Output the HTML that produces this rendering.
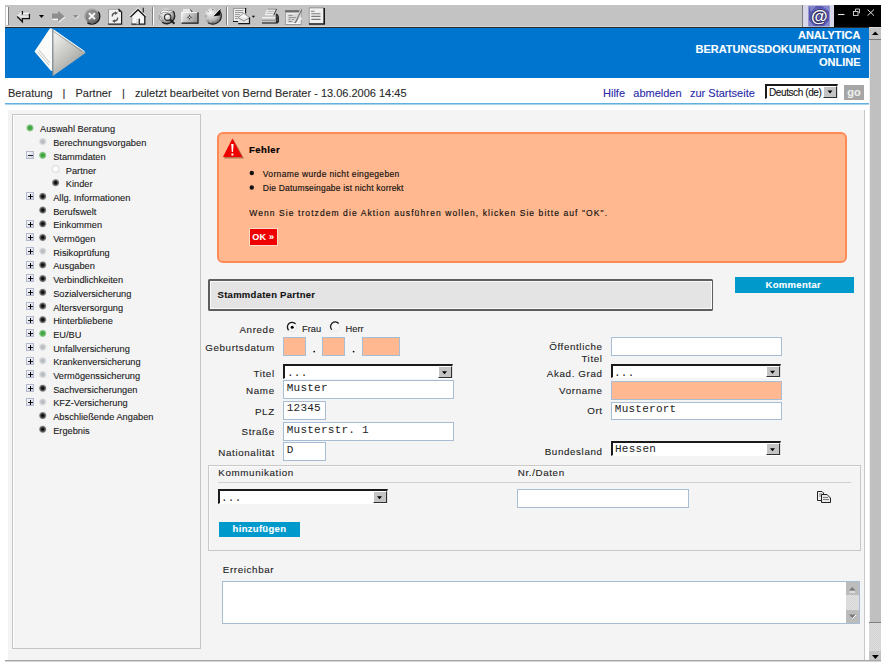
<!DOCTYPE html>
<html><head><meta charset="utf-8">
<style>
*{margin:0;padding:0;box-sizing:border-box}
html,body{width:887px;height:663px;overflow:hidden;background:#fff;font-family:"Liberation Sans",sans-serif;position:relative}
.a{position:absolute}
.t{position:absolute;white-space:nowrap;line-height:1;-webkit-text-stroke:0.1px currentColor}
svg{position:absolute;overflow:visible}
</style></head><body>

<div class="a" style="left:5px;top:5px;width:797px;height:21px;background:#c3c3c3"></div>
<div class="a" style="left:5px;top:26px;width:797px;height:1px;background:#d6d6d4"></div>
<div class="a" style="left:5px;top:27px;width:864px;height:1px;background:#2a2a2a"></div>
<div class="a" style="left:802px;top:5px;width:1px;height:22px;background:#7a7a7a"></div>
<div class="a" style="left:803px;top:5px;width:31px;height:22px;background:#d8d8ea"></div>
<div class="a" style="left:834px;top:5px;width:47px;height:22px;background:#000"></div>
<div class="a" style="left:6px;top:7px;width:2px;height:18px;background:#fff"></div>
<div class="a" style="left:8px;top:7px;width:1px;height:18px;background:#808080"></div>
<div class="a" style="left:152px;top:7px;width:1px;height:18px;background:#808080"></div>
<div class="a" style="left:153px;top:7px;width:1px;height:18px;background:#fff"></div>
<div class="a" style="left:226px;top:7px;width:1px;height:18px;background:#808080"></div>
<div class="a" style="left:227px;top:7px;width:1px;height:18px;background:#fff"></div>
<svg style="left:0;top:0" width="887" height="30" viewBox="0 0 887 30">
<defs>
<radialGradient id="stopg" cx="0.4" cy="0.35" r="0.7"><stop offset="0" stop-color="#a0a0a0"/><stop offset="0.7" stop-color="#787878"/><stop offset="1" stop-color="#5a5a5a"/></radialGradient>
<radialGradient id="globeg" cx="0.35" cy="0.3" r="0.8"><stop offset="0" stop-color="#f8f8f8"/><stop offset="0.6" stop-color="#b8b8b8"/><stop offset="1" stop-color="#5a5a5a"/></radialGradient>
<linearGradient id="foldg" x1="0" y1="0" x2="1" y2="0.4"><stop offset="0" stop-color="#f0f0f0"/><stop offset="1" stop-color="#9a9a9a"/></linearGradient>
<linearGradient id="homeg" x1="0" y1="0" x2="0" y2="1"><stop offset="0" stop-color="#ffffff"/><stop offset="1" stop-color="#e0e0e0"/></linearGradient>
<radialGradient id="lensg" cx="0.4" cy="0.35" r="0.7"><stop offset="0" stop-color="#ffffff"/><stop offset="1" stop-color="#b0b0b0"/></radialGradient>
</defs>
<!-- back arrow -->
<path d="M17.2 16.3 L22.4 11.1 L22.4 13.6 L29.6 13.6 L29.6 18.4 L22.4 18.4 L22.4 21.6 Z" fill="#d4d4d4"/>
<path d="M17.6 16.3 L22 11.9 M22.6 13.4 L29.4 13.4" stroke="#fafafa" stroke-width="1.2" fill="none"/>
<path d="M22.4 11 L22.4 14.4 M29.4 13.8 L29.4 18.6 L22.4 18.6 L22.4 21.8 L17.2 16.5" stroke="#141414" stroke-width="1.3" fill="none"/>
<path d="M19 16.6 L22.5 16.6 L28.5 16.6" stroke="#f0f0f0" stroke-width="0.8"/>
<path d="M39 15 L44 15 L41.5 18 Z" fill="#000"/>
<!-- forward arrow (disabled) -->
<path d="M52 13.6 L58 13.6 L58 11 L64.5 16.2 L58 21.5 L58 18.4 L52 18.4 Z" fill="#8e8e8e"/>
<path d="M52.5 19.4 L58 19.4 M58.8 22.3 L65.2 17" stroke="#fff" stroke-width="1"/>
<path d="M73 15 L78.5 15 L75.7 18 Z" fill="#8e8e8e"/>
<path d="M76 18.5 L79 15.5" stroke="#fff" stroke-width="0.8"/>
<!-- stop -->
<circle cx="91.9" cy="16.2" r="7.8" fill="#a8a8a8"/>
<circle cx="92.2" cy="16.5" r="6.6" fill="url(#stopg)"/>
<path d="M87.4 22.6 A7.8 7.8 0 0 0 98.3 11.7" fill="none" stroke="#1a1a1a" stroke-width="1.4"/>
<path d="M88.9 13.1 L95 19.2 M95 13.1 L88.9 19.2" stroke="#fff" stroke-width="1.8"/>
<!-- refresh -->
<path d="M108 8.8 L119 8.8 L121.8 11.6 L121.8 24.3 L108 24.3 Z" fill="#f2f2f2"/>
<path d="M108.5 24 L108.5 9.2 L118.5 9.2" fill="none" stroke="#9a9a9a" stroke-width="1"/>
<path d="M118.5 9 L121.6 12 L121.6 24.1 L108.2 24.1" fill="none" stroke="#1a1a1a" stroke-width="1.2"/>
<path d="M118.6 9.5 L118.6 11.8 L121 11.8 Z" fill="#1a1a1a"/>
<path d="M112.3 16.5 Q112.3 13 115.5 13" fill="none" stroke="#5a5a5a" stroke-width="1.4"/>
<path d="M115 11.2 L118 13 L115 15 Z" fill="#5a5a5a"/>
<path d="M117.6 17.5 Q117.6 21 114.5 21" fill="none" stroke="#5a5a5a" stroke-width="1.4"/>
<path d="M115 19.2 L112 21 L115 23 Z" fill="#5a5a5a"/>
<!-- home -->
<path d="M131.5 16.3 L138 9.8 L144.8 16.3 L144.8 24.3 L131.5 24.3 Z" fill="#f6f6f6"/>
<path d="M129.8 16 L137.8 8.2 L145.8 16" fill="none" stroke="#fafafa" stroke-width="1.2" stroke-dasharray="1.2 0.6"/>
<path d="M130.5 17 L138 9.7 L145.5 17" fill="none" stroke="#151515" stroke-width="1.2"/>
<path d="M143.3 7.8 L143.3 12.6" stroke="#222" stroke-width="1.1"/>
<path d="M131.8 17 L131.8 24" stroke="#909090" stroke-width="0.9"/>
<path d="M144.8 16.8 L144.8 24.1 L131.4 24.1" fill="none" stroke="#1a1a1a" stroke-width="1.3"/>
<rect x="136.4" y="19" width="2.6" height="5.2" fill="#c8c8c8"/>
<rect x="136.8" y="19.6" width="1.2" height="2" fill="#fff"/>
<path d="M139.3 18.8 L139.3 24.2" stroke="#111" stroke-width="1.1"/>
<!-- search -->
<circle cx="166.7" cy="15.7" r="8" fill="url(#globeg)"/>
<path d="M162.1 22.25 A8 8 0 0 0 173.25 11.1" fill="none" stroke="#252525" stroke-width="1.4"/>
<path d="M160.5 11.8 Q163 9 166 10.2 Q169 11.8 171.5 10.5 L172.5 12 Q169.5 14 166 12.5 Q163 11.5 161 14 Z" fill="#fafafa" stroke="#555" stroke-width="0.5"/>
<path d="M159.5 15.5 Q161 17.5 162.5 20.5 L161 20.8 Q159 18.5 159 16 Z" fill="#f0f0f0" stroke="#555" stroke-width="0.5"/>
<circle cx="167.7" cy="17.2" r="3.2" fill="url(#lensg)" stroke="#2a2a2a" stroke-width="1.1"/>
<path d="M170.3 19.8 L174.4 23.8" stroke="#1a1a1a" stroke-width="2"/>
<!-- favorites folder -->
<path d="M182.4 12.2 L183.2 9.6 L190.2 9.6 L192.2 12.2 Z" fill="#e4e4e4"/>
<path d="M183 9.8 L190 9.8" stroke="#fafafa" stroke-width="0.9"/>
<path d="M190.3 9.5 L192.4 12.1" stroke="#2a2a2a" stroke-width="1"/>
<rect x="181.4" y="12.1" width="17" height="11.4" fill="url(#foldg)"/>
<path d="M181.8 23.2 L181.8 12.5 L197.8 12.5" fill="none" stroke="#fafafa" stroke-width="0.9"/>
<path d="M198 12.3 L198 23.2 L181.5 23.2" fill="none" stroke="#1a1a1a" stroke-width="1.2"/>
<path d="M189.5 14.2 L190.2 16.5 L192.5 17.2 L190.2 17.9 L189.5 20.2 L188.8 17.9 L186.5 17.2 L188.8 16.5 Z" fill="#333"/>
<circle cx="189.5" cy="17.2" r="0.8" fill="#fff"/>
<!-- history -->
<ellipse cx="212.9" cy="16" rx="8.6" ry="8.2" fill="url(#globeg)"/>
<path d="M208 22.7 A8.6 8.2 0 0 0 219.9 11.3" fill="none" stroke="#2a2a2a" stroke-width="1.3"/>
<path d="M212.9 8.8 L212.9 10.3 M205.2 16 L206.7 16 M212.9 23.2 L212.9 21.7 M207.5 10.6 L208.5 11.6 M207.5 21.4 L208.5 20.4 M218.3 21.4 L217.3 20.4" stroke="#555" stroke-width="0.8"/>
<path d="M213.5 16.2 L220.6 8.8 L219.8 15.5 Z" fill="#050505"/>
<path d="M213 15.8 L220.2 8.7" stroke="#f4f4f4" stroke-width="0.8"/>
<!-- mail -->
<rect x="232.8" y="7.8" width="13" height="13.9" fill="#f0f0f0"/>
<path d="M233.3 21.5 L233.3 8.3 L245.5 8.3" fill="none" stroke="#8a8a8a" stroke-width="1"/>
<path d="M245.6 8 L245.6 13.5 M233 21.5 L238.5 21.5" stroke="#151515" stroke-width="1.2"/>
<path d="M235 10.6 L243.5 10.6 M235 12.6 L243 12.6 M235 14.6 L240 14.6 M235 16.6 L238.5 16.6 M235 18.6 L238 18.6" stroke="#8a8a8a" stroke-width="0.9"/>
<path d="M238.2 17.6 L243.6 13.2 L249.6 17.6 L249.6 23.9 L238.2 23.9 Z" fill="#e4e4e4"/>
<path d="M238.2 17.6 L243.6 13.2 L249.6 17.6" fill="#f8f8f8" stroke="#666" stroke-width="0.7"/>
<path d="M238.5 18 L243.9 21 L249.3 18" fill="none" stroke="#777" stroke-width="0.8"/>
<path d="M249.5 17.6 L249.5 23.7 L238.2 23.7" fill="none" stroke="#151515" stroke-width="1.2"/>
<path d="M251.8 15.7 L255 15.7 L253.4 17.7 Z" fill="#000"/>
<!-- print -->
<path d="M267.1 8.9 L276.7 8.9 L273.6 15.4 L264.7 15.4 Z" fill="#f4f4f4"/>
<path d="M267.3 9.2 L276.4 9.2" stroke="#777" stroke-width="0.8"/>
<path d="M276.6 9 L273.6 15.4" stroke="#222" stroke-width="0.9"/>
<path d="M267.5 11.3 L274.5 11.3 M266.5 13.3 L273.5 13.3" stroke="#a0a0a0" stroke-width="0.8"/>
<path d="M262.5 15.4 L275.5 15.4 L278.7 17.5 L278.7 23.2 L261.6 23.2 L261.6 17 Z" fill="#c4c4c4"/>
<path d="M262 17.8 L275 17.8" stroke="#fafafa" stroke-width="1.2"/>
<path d="M262 20.3 L275 20.3" stroke="#8a8a8a" stroke-width="0.9"/>
<path d="M262 23 L276 23" stroke="#1a1a1a" stroke-width="1.1"/>
<path d="M275.8 13.5 L277.5 14 L279 16.5 L279 22 L277.5 23.4 L275.8 23.4 Z" fill="#2a2a2a"/>
<path d="M276.5 17 L278 17 M276.5 20 L278 20" stroke="#888" stroke-width="0.7"/>
<!-- edit -->
<rect x="285.2" y="10.2" width="16.4" height="14.8" fill="#9a9a9a"/>
<rect x="285.2" y="10.2" width="16.4" height="2" fill="#6a6a6a"/>
<rect x="286.7" y="13.2" width="13.4" height="10.3" fill="#d8d8d8" stroke="#fafafa" stroke-width="1"/>
<path d="M288.5 15.5 L292.5 15.5 M288.5 17.6 L296 17.6 M288.5 19.6 L290.5 19.6 M292 19.6 L294 19.6 M288.5 21.5 L292 21.5" stroke="#8a8a8a" stroke-width="0.9"/>
<path d="M294 22.8 L300.5 8.5 L302.2 9.4 L296 23.2 Z" fill="#7a7a7a"/>
<path d="M294.2 22.5 L300.8 9" stroke="#f4f4f4" stroke-width="0.8"/>
<path d="M296.5 23.5 L301.6 18" stroke="#f8f8f8" stroke-width="1.4"/>
<!-- discuss -->
<rect x="308.6" y="7.3" width="16.3" height="17.3" fill="#f0f0f0"/>
<path d="M309.1 24.3 L309.1 7.8 L324.4 7.8" fill="none" stroke="#8a8a8a" stroke-width="1"/>
<path d="M324.2 8 L324.2 24 L309 24" fill="none" stroke="#151515" stroke-width="1.6"/>
<path d="M311 11.2 L314.5 11.2 M311.3 13.7 L320.5 13.7 M311.3 16.4 L320.5 16.4 M311.3 19.4 L320.5 19.4" stroke="#7a7a7a" stroke-width="1.1"/>
<!-- @ logo -->
<rect x="808.5" y="5.8" width="21" height="20.5" fill="#5656b0"/>
<path d="M809 6 L816 6 L811 12 Z M822 6 L829.5 6 L829.5 12 Z M809 20 L814 26 L809 26 Z M824 26 L829.5 20 L829.5 26 Z" fill="#9a9ad8" opacity="0.7"/>
<path d="M813 8 L826 8 L826 24 L813 24 Z" fill="#6a6ac0" opacity="0.5"/>
<text x="819.3" y="21.5" text-anchor="middle" font-family="Liberation Sans" font-weight="bold" font-size="17" fill="#fff" stroke="#2a2a5a" stroke-width="1.6" paint-order="stroke">@</text>
<!-- window controls -->
<path d="M838 14.5 L844.5 14.5" stroke="#e0e0e0" stroke-width="1.1"/>
<rect x="853.5" y="11.5" width="4.5" height="4" fill="none" stroke="#d8d8d8" stroke-width="0.9"/>
<path d="M855.5 11 L855.5 9 L859.5 9 L859.5 13 L858.3 13" fill="none" stroke="#d8d8d8" stroke-width="0.9"/>
<path d="M867.5 9.5 L874 15.7 M874 9.5 L867.5 15.7" stroke="#e0e0e0" stroke-width="1"/>
</svg>

<div class="a" style="left:5px;top:28px;width:864px;height:50px;background:#0075cf"></div>
<svg style="left:0;top:0" width="100" height="80" viewBox="0 0 100 80">
<defs>
<linearGradient id="lg" x1="0.1" y1="0.1" x2="0.7" y2="1"><stop offset="0" stop-color="#eeeeea"/><stop offset="0.55" stop-color="#c0c0bc"/><stop offset="1" stop-color="#949490"/></linearGradient>
</defs>
<path d="M50 28.3 L52.5 28.8 L52.5 71 L50.8 70.8 L34.5 51.5 Z" fill="#fbfbfa"/>
<path d="M37.5 51.5 L49 65 M39 50 L50 63" stroke="#9a9a9a" stroke-width="0.6"/>
<path d="M52.6 29.3 L85.8 52.7 L52.6 76.2 Z" fill="url(#lg)"/>
<path d="M53.5 29.8 L84.5 51.5" stroke="#fff" stroke-width="1"/>
<path d="M53.5 31.5 L82 51.5" stroke="#6e6e6a" stroke-width="0.5"/>
<path d="M52.9 29.5 L52.9 76" stroke="#6a6a68" stroke-width="0.8"/>
</svg>

<div class="t" style="top:29.99px;font-size:11px;font-family:'Liberation Sans',sans-serif;color:#fff;font-weight:bold;letter-spacing:0px;right:26.50px;text-align:right;">ANALYTICA</div>
<div class="t" style="top:43.59px;font-size:11px;font-family:'Liberation Sans',sans-serif;color:#fff;font-weight:bold;letter-spacing:0px;right:26.50px;text-align:right;">BERATUNGSDOKUMENTATION</div>
<div class="t" style="top:57.39px;font-size:11px;font-family:'Liberation Sans',sans-serif;color:#fff;font-weight:bold;letter-spacing:0px;right:26.50px;text-align:right;">ONLINE</div>
<svg style="left:0;top:0" width="887" height="663" viewBox="0 0 887 663">
<defs>
<pattern id="dith" width="2" height="2" patternUnits="userSpaceOnUse"><rect width="2" height="2" fill="#e0e0e0"/><rect width="1" height="1" fill="#d0d0d0"/><rect x="1" y="1" width="1" height="1" fill="#d0d0d0"/></pattern>
</defs>
<rect x="869" y="27" width="12" height="634" fill="url(#dith)"/>
<!-- up button -->
<rect x="869" y="28" width="12" height="12" fill="#c4c4c4"/>
<rect x="869" y="39" width="12" height="1" fill="#7a7a7a"/>
<path d="M872 35 L878.5 35 L875.25 31.5 Z" fill="#000"/>
<!-- thumb -->
<rect x="869" y="40" width="12" height="583" fill="#c0c0c0"/>
<rect x="869" y="40" width="1" height="583" fill="#f0f0f0"/>
<rect x="869" y="622" width="12" height="1" fill="#808080"/>
<!-- down button -->
<rect x="869" y="651" width="12" height="10" fill="#c4c4c4"/>
<path d="M872 655 L878.8 655 L875.4 659 Z" fill="#000"/>
</svg>

<div class="t" style="top:88.09px;font-size:11px;font-family:'Liberation Sans',sans-serif;color:#2a2a2a;left:8px;">Beratung</div>
<div class="t" style="top:88.09px;font-size:11px;font-family:'Liberation Sans',sans-serif;color:#2a2a2a;left:62.5px;">|</div>
<div class="t" style="top:88.09px;font-size:11px;font-family:'Liberation Sans',sans-serif;color:#2a2a2a;left:75.5px;">Partner</div>
<div class="t" style="top:88.09px;font-size:11px;font-family:'Liberation Sans',sans-serif;color:#2a2a2a;left:122px;">|</div>
<div class="t" style="top:88.09px;font-size:11px;font-family:'Liberation Sans',sans-serif;color:#2a2a2a;left:135px;">zuletzt bearbeitet von Bernd Berater - 13.06.2006 14:45</div>
<div class="t" style="top:88.29px;font-size:11px;font-family:'Liberation Sans',sans-serif;color:#2a2aa8;left:603px;">Hilfe</div>
<div class="t" style="top:88.29px;font-size:11px;font-family:'Liberation Sans',sans-serif;color:#2a2aa8;left:633.3px;">abmelden</div>
<div class="t" style="top:88.29px;font-size:11px;font-family:'Liberation Sans',sans-serif;color:#2a2aa8;left:690px;">zur Startseite</div>
<div class="a" style="left:765px;top:84px;width:73px;height:15px;background:#fff;border-top:2px solid #1a1a1a;border-left:2px solid #1a1a1a;border-right:1px solid #dcdcdc;border-bottom:1px solid #fff"></div>
<div class="t" style="left:769px;top:88px;font-size:10px;color:#111;letter-spacing:-0.4px">Deutsch (de)</div>
<div class="a" style="left:823px;top:86px;width:14px;height:12px;background:#c4c4c4;border-top:1px solid #fff;border-left:1px solid #fff;border-right:1px solid #303030;border-bottom:1px solid #303030"></div>
<svg style="left:0;top:0" width="887" height="120"><path d="M827.5 90.5 L832.5 90.5 L830 93.5 Z" fill="#000"/></svg>
<div class="a" style="left:844px;top:85px;width:20px;height:15px;background:#a6a6a6"></div>
<div class="t" style="left:844px;top:87px;width:20px;text-align:center;font-size:11px;font-weight:bold;color:#eee">go</div>

<div class="a" style="left:5px;top:103px;width:864px;height:1px;background:#60b0e0"></div>
<div class="a" style="left:5px;top:104px;width:864px;height:1px;background:#a8d4f0"></div>
<div class="a" style="left:8px;top:110px;width:857px;height:551px;background:#f4f4f4"></div>
<div class="a" style="left:864px;top:110px;width:1px;height:551px;background:#c8c8c8"></div>
<div class="a" style="left:5px;top:660px;width:876px;height:1px;background:#a8a8a8"></div>
<div class="a" style="left:5px;top:661px;width:876px;height:1px;background:#d4d4d4"></div>
<div class="a" style="left:12px;top:114px;width:189px;height:535px;border:1px solid #c6c6c6;box-shadow:inset 1px 1px 0 #fcfcfc"></div>
<div class="t" style="top:125.47px;font-size:9.25px;font-family:'Liberation Sans',sans-serif;color:#1a1a1a;letter-spacing:0px;left:40px;">Auswahl Beratung</div>
<div class="t" style="top:139.17px;font-size:9.25px;font-family:'Liberation Sans',sans-serif;color:#1a1a1a;letter-spacing:0px;left:53.2px;">Berechnungsvorgaben</div>
<div class="t" style="top:152.87px;font-size:9.25px;font-family:'Liberation Sans',sans-serif;color:#1a1a1a;letter-spacing:0px;left:53.2px;">Stammdaten</div>
<div class="t" style="top:166.57px;font-size:9.25px;font-family:'Liberation Sans',sans-serif;color:#1a1a1a;letter-spacing:0px;left:65.8px;">Partner</div>
<div class="t" style="top:180.27px;font-size:9.25px;font-family:'Liberation Sans',sans-serif;color:#1a1a1a;letter-spacing:0px;left:65.8px;">Kinder</div>
<div class="t" style="top:193.97px;font-size:9.25px;font-family:'Liberation Sans',sans-serif;color:#1a1a1a;letter-spacing:0px;left:53.2px;">Allg. Informationen</div>
<div class="t" style="top:207.67px;font-size:9.25px;font-family:'Liberation Sans',sans-serif;color:#1a1a1a;letter-spacing:0px;left:53.2px;">Berufswelt</div>
<div class="t" style="top:221.37px;font-size:9.25px;font-family:'Liberation Sans',sans-serif;color:#1a1a1a;letter-spacing:0px;left:53.2px;">Einkommen</div>
<div class="t" style="top:235.07px;font-size:9.25px;font-family:'Liberation Sans',sans-serif;color:#1a1a1a;letter-spacing:0px;left:53.2px;">Vermögen</div>
<div class="t" style="top:248.77px;font-size:9.25px;font-family:'Liberation Sans',sans-serif;color:#1a1a1a;letter-spacing:0px;left:53.2px;">Risikoprüfung</div>
<div class="t" style="top:262.47px;font-size:9.25px;font-family:'Liberation Sans',sans-serif;color:#1a1a1a;letter-spacing:0px;left:53.2px;">Ausgaben</div>
<div class="t" style="top:276.17px;font-size:9.25px;font-family:'Liberation Sans',sans-serif;color:#1a1a1a;letter-spacing:0px;left:53.2px;">Verbindlichkeiten</div>
<div class="t" style="top:289.87px;font-size:9.25px;font-family:'Liberation Sans',sans-serif;color:#1a1a1a;letter-spacing:0px;left:53.2px;">Sozialversicherung</div>
<div class="t" style="top:303.57px;font-size:9.25px;font-family:'Liberation Sans',sans-serif;color:#1a1a1a;letter-spacing:0px;left:53.2px;">Altersversorgung</div>
<div class="t" style="top:317.27px;font-size:9.25px;font-family:'Liberation Sans',sans-serif;color:#1a1a1a;letter-spacing:0px;left:53.2px;">Hinterbliebene</div>
<div class="t" style="top:330.97px;font-size:9.25px;font-family:'Liberation Sans',sans-serif;color:#1a1a1a;letter-spacing:0px;left:53.2px;">EU/BU</div>
<div class="t" style="top:344.67px;font-size:9.25px;font-family:'Liberation Sans',sans-serif;color:#1a1a1a;letter-spacing:0px;left:53.2px;">Unfallversicherung</div>
<div class="t" style="top:358.37px;font-size:9.25px;font-family:'Liberation Sans',sans-serif;color:#1a1a1a;letter-spacing:0px;left:53.2px;">Krankenversicherung</div>
<div class="t" style="top:372.07px;font-size:9.25px;font-family:'Liberation Sans',sans-serif;color:#1a1a1a;letter-spacing:0px;left:53.2px;">Vermögenssicherung</div>
<div class="t" style="top:385.77px;font-size:9.25px;font-family:'Liberation Sans',sans-serif;color:#1a1a1a;letter-spacing:0px;left:53.2px;">Sachversicherungen</div>
<div class="t" style="top:399.47px;font-size:9.25px;font-family:'Liberation Sans',sans-serif;color:#1a1a1a;letter-spacing:0px;left:53.2px;">KFZ-Versicherung</div>
<div class="t" style="top:413.17px;font-size:9.25px;font-family:'Liberation Sans',sans-serif;color:#1a1a1a;letter-spacing:0px;left:53.2px;">Abschließende Angaben</div>
<div class="t" style="top:426.87px;font-size:9.25px;font-family:'Liberation Sans',sans-serif;color:#1a1a1a;letter-spacing:0px;left:53.2px;">Ergebnis</div>
<svg style="left:0;top:0" width="210" height="450" viewBox="0 0 210 450"><defs>
<radialGradient id="dk"><stop offset="0" stop-color="#000"/><stop offset="0.3" stop-color="#181818"/><stop offset="0.75" stop-color="#5a5a5a" stop-opacity="0.8"/><stop offset="1" stop-color="#b0b0b0" stop-opacity="0.2"/></radialGradient>
<radialGradient id="dg"><stop offset="0" stop-color="#38a038"/><stop offset="0.45" stop-color="#48ac48"/><stop offset="0.8" stop-color="#80c080" stop-opacity="0.8"/><stop offset="1" stop-color="#c0e0c0" stop-opacity="0.2"/></radialGradient>
<radialGradient id="ds"><stop offset="0" stop-color="#b4b8bc"/><stop offset="0.5" stop-color="#c0c4c8"/><stop offset="1" stop-color="#e0e2e4" stop-opacity="0.4"/></radialGradient>
<radialGradient id="dw"><stop offset="0" stop-color="#ffffff"/><stop offset="0.6" stop-color="#fafafa"/><stop offset="1" stop-color="#c8c8c8" stop-opacity="0.6"/></radialGradient>
<linearGradient id="exg" x1="0" y1="0" x2="1" y2="1"><stop offset="0" stop-color="#ffffff"/><stop offset="1" stop-color="#c8cce0"/></linearGradient>
</defs>
<circle cx="30" cy="127.90" r="4" fill="url(#dg)"/>
<circle cx="42.7" cy="141.60" r="4" fill="url(#ds)"/>
<circle cx="42.7" cy="155.30" r="4" fill="url(#dg)"/>
<rect x="26.5" y="151.5" width="7" height="7" fill="url(#exg)" stroke="#b4b8cc" stroke-width="1"/>
<path d="M28 155.5 L33 155.5" stroke="#222" stroke-width="1"/>
<circle cx="55.6" cy="169.00" r="4" fill="url(#dw)"/>
<circle cx="55.6" cy="182.70" r="4" fill="url(#dk)"/>
<circle cx="42.7" cy="196.40" r="4" fill="url(#dk)"/>
<rect x="26.5" y="192.5" width="7" height="7" fill="url(#exg)" stroke="#b4b8cc" stroke-width="1"/>
<path d="M28 196.5 L33 196.5" stroke="#222" stroke-width="1"/>
<path d="M30.5 194 L30.5 199" stroke="#000" stroke-width="1"/>
<circle cx="42.7" cy="210.10" r="4" fill="url(#dk)"/>
<circle cx="42.7" cy="223.80" r="4" fill="url(#dk)"/>
<rect x="26.5" y="220.5" width="7" height="7" fill="url(#exg)" stroke="#b4b8cc" stroke-width="1"/>
<path d="M28 224.5 L33 224.5" stroke="#222" stroke-width="1"/>
<path d="M30.5 222 L30.5 227" stroke="#000" stroke-width="1"/>
<circle cx="42.7" cy="237.50" r="4" fill="url(#dk)"/>
<rect x="26.5" y="233.5" width="7" height="7" fill="url(#exg)" stroke="#b4b8cc" stroke-width="1"/>
<path d="M28 237.5 L33 237.5" stroke="#222" stroke-width="1"/>
<path d="M30.5 235 L30.5 240" stroke="#000" stroke-width="1"/>
<circle cx="42.7" cy="251.20" r="4" fill="url(#ds)"/>
<rect x="26.5" y="247.5" width="7" height="7" fill="url(#exg)" stroke="#b4b8cc" stroke-width="1"/>
<path d="M28 251.5 L33 251.5" stroke="#222" stroke-width="1"/>
<path d="M30.5 249 L30.5 254" stroke="#000" stroke-width="1"/>
<circle cx="42.7" cy="264.90" r="4" fill="url(#dk)"/>
<rect x="26.5" y="261.5" width="7" height="7" fill="url(#exg)" stroke="#b4b8cc" stroke-width="1"/>
<path d="M28 265.5 L33 265.5" stroke="#222" stroke-width="1"/>
<path d="M30.5 263 L30.5 268" stroke="#000" stroke-width="1"/>
<circle cx="42.7" cy="278.60" r="4" fill="url(#dk)"/>
<rect x="26.5" y="274.5" width="7" height="7" fill="url(#exg)" stroke="#b4b8cc" stroke-width="1"/>
<path d="M28 278.5 L33 278.5" stroke="#222" stroke-width="1"/>
<path d="M30.5 276 L30.5 281" stroke="#000" stroke-width="1"/>
<circle cx="42.7" cy="292.30" r="4" fill="url(#dk)"/>
<rect x="26.5" y="288.5" width="7" height="7" fill="url(#exg)" stroke="#b4b8cc" stroke-width="1"/>
<path d="M28 292.5 L33 292.5" stroke="#222" stroke-width="1"/>
<path d="M30.5 290 L30.5 295" stroke="#000" stroke-width="1"/>
<circle cx="42.7" cy="306.00" r="4" fill="url(#dk)"/>
<rect x="26.5" y="302.5" width="7" height="7" fill="url(#exg)" stroke="#b4b8cc" stroke-width="1"/>
<path d="M28 306.5 L33 306.5" stroke="#222" stroke-width="1"/>
<path d="M30.5 304 L30.5 309" stroke="#000" stroke-width="1"/>
<circle cx="42.7" cy="319.70" r="4" fill="url(#dk)"/>
<rect x="26.5" y="316.5" width="7" height="7" fill="url(#exg)" stroke="#b4b8cc" stroke-width="1"/>
<path d="M28 320.5 L33 320.5" stroke="#222" stroke-width="1"/>
<path d="M30.5 318 L30.5 323" stroke="#000" stroke-width="1"/>
<circle cx="42.7" cy="333.40" r="4" fill="url(#dg)"/>
<rect x="26.5" y="329.5" width="7" height="7" fill="url(#exg)" stroke="#b4b8cc" stroke-width="1"/>
<path d="M28 333.5 L33 333.5" stroke="#222" stroke-width="1"/>
<path d="M30.5 331 L30.5 336" stroke="#000" stroke-width="1"/>
<circle cx="42.7" cy="347.10" r="4" fill="url(#ds)"/>
<rect x="26.5" y="343.5" width="7" height="7" fill="url(#exg)" stroke="#b4b8cc" stroke-width="1"/>
<path d="M28 347.5 L33 347.5" stroke="#222" stroke-width="1"/>
<path d="M30.5 345 L30.5 350" stroke="#000" stroke-width="1"/>
<circle cx="42.7" cy="360.80" r="4" fill="url(#ds)"/>
<rect x="26.5" y="357.5" width="7" height="7" fill="url(#exg)" stroke="#b4b8cc" stroke-width="1"/>
<path d="M28 361.5 L33 361.5" stroke="#222" stroke-width="1"/>
<path d="M30.5 359 L30.5 364" stroke="#000" stroke-width="1"/>
<circle cx="42.7" cy="374.50" r="4" fill="url(#ds)"/>
<rect x="26.5" y="370.5" width="7" height="7" fill="url(#exg)" stroke="#b4b8cc" stroke-width="1"/>
<path d="M28 374.5 L33 374.5" stroke="#222" stroke-width="1"/>
<path d="M30.5 372 L30.5 377" stroke="#000" stroke-width="1"/>
<circle cx="42.7" cy="388.20" r="4" fill="url(#dk)"/>
<rect x="26.5" y="384.5" width="7" height="7" fill="url(#exg)" stroke="#b4b8cc" stroke-width="1"/>
<path d="M28 388.5 L33 388.5" stroke="#222" stroke-width="1"/>
<path d="M30.5 386 L30.5 391" stroke="#000" stroke-width="1"/>
<circle cx="42.7" cy="401.90" r="4" fill="url(#ds)"/>
<rect x="26.5" y="398.5" width="7" height="7" fill="url(#exg)" stroke="#b4b8cc" stroke-width="1"/>
<path d="M28 402.5 L33 402.5" stroke="#222" stroke-width="1"/>
<path d="M30.5 400 L30.5 405" stroke="#000" stroke-width="1"/>
<circle cx="42.7" cy="415.60" r="4" fill="url(#dk)"/>
<circle cx="42.7" cy="429.30" r="4" fill="url(#dk)"/>
</svg>
<div class="a" style="left:217px;top:132px;width:630px;height:131px;background:#ffb88f;border:2px solid #ff8a55;border-radius:6px"></div>
<svg style="left:0;top:0" width="300" height="200" viewBox="0 0 300 200">
<path d="M233.5 139.5 L244 158.5 L224 158.5 Z" fill="#7a3a20" opacity="0.55"/>
<path d="M232.4 138.4 L242.2 157 L222.9 157 Z" fill="#ee0000"/>
<path d="M231.2 144 L233.6 144 L233 152 L231.8 152 Z" fill="#fff"/>
<rect x="231.4" y="153.5" width="2" height="2" fill="#fff"/>
</svg>
<div class="t" style="top:144.86px;font-size:9.5px;font-family:'Liberation Sans',sans-serif;color:#000;font-weight:bold;letter-spacing:0.45px;left:249px;-webkit-text-stroke:0.2px #000;">Fehler</div>
<svg style="left:0;top:0" width="300" height="200"><circle cx="251.8" cy="173" r="2.2" fill="#111"/><circle cx="251.8" cy="187.5" r="2.2" fill="#111"/></svg>
<div class="t" style="top:169.80px;font-size:8.5px;font-family:'Liberation Sans',sans-serif;color:#111;letter-spacing:0.34px;left:262.8px;-webkit-text-stroke:0.15px #111;">Vorname wurde nicht eingegeben</div>
<div class="t" style="top:184.40px;font-size:8.5px;font-family:'Liberation Sans',sans-serif;color:#111;letter-spacing:0.19px;left:262.8px;-webkit-text-stroke:0.15px #111;">Die Datumseingabe ist nicht korrekt</div>
<div class="t" style="top:209.20px;font-size:8.5px;font-family:'Liberation Sans',sans-serif;color:#111;letter-spacing:1.08px;left:249.2px;-webkit-text-stroke:0.15px #111;">Wenn Sie trotzdem die Aktion ausführen wollen, klicken Sie bitte auf "OK".</div>
<div class="a" style="left:249px;top:228px;width:29px;height:18px;background:#ee0000;border:1px solid #ffd8c8"></div>
<div class="t" style="top:232.58px;font-size:9px;font-family:'Liberation Sans',sans-serif;color:#fff;font-weight:bold;letter-spacing:0.2px;left:252.3px;">OK »</div>
<div class="a" style="left:208px;top:279px;width:505px;height:32px;background:#e4e4e4;border:2px solid #5e5e5e;border-right-width:1.5px;border-radius:1.5px;box-shadow:inset 0 0 0 1px #fafafa"></div>
<div class="t" style="top:290.16px;font-size:9.5px;font-family:'Liberation Sans',sans-serif;color:#111;font-weight:bold;letter-spacing:0.26px;left:217.6px;">Stammdaten Partner</div>
<div class="a" style="left:735px;top:277px;width:119px;height:16px;background:#0099cc"></div>
<div class="t" style="top:280.16px;font-size:9.5px;font-family:'Liberation Sans',sans-serif;color:#fff;font-weight:bold;letter-spacing:0.3px;left:765.6px;">Kommentar</div>
<div class="t" style="top:325.30px;font-size:9.8px;font-family:'Liberation Sans',sans-serif;color:#222;letter-spacing:0.62px;right:612.28px;text-align:right;">Anrede</div>
<div class="t" style="top:342.70px;font-size:9.8px;font-family:'Liberation Sans',sans-serif;color:#222;letter-spacing:0.62px;right:612.28px;text-align:right;">Geburtsdatum</div>
<div class="t" style="top:368.70px;font-size:9.8px;font-family:'Liberation Sans',sans-serif;color:#222;letter-spacing:0.62px;right:612.28px;text-align:right;">Titel</div>
<div class="t" style="top:385.70px;font-size:9.8px;font-family:'Liberation Sans',sans-serif;color:#222;letter-spacing:0.62px;right:612.28px;text-align:right;">Name</div>
<div class="t" style="top:406.70px;font-size:9.8px;font-family:'Liberation Sans',sans-serif;color:#222;letter-spacing:0.62px;right:612.28px;text-align:right;">PLZ</div>
<div class="t" style="top:426.70px;font-size:9.8px;font-family:'Liberation Sans',sans-serif;color:#222;letter-spacing:0.62px;right:612.28px;text-align:right;">Straße</div>
<div class="t" style="top:447.70px;font-size:9.8px;font-family:'Liberation Sans',sans-serif;color:#222;letter-spacing:0.62px;right:612.28px;text-align:right;">Nationalität</div>
<svg style="left:0;top:0" width="887" height="663">
<circle cx="292.2" cy="327.2" r="4.4" fill="#f8f8f8" stroke="#e2e2e2" stroke-width="0.8"/>
<path d="M288.6 330.2 A4.4 4.4 0 0 1 295.6 323.9" fill="none" stroke="#1a1a1a" stroke-width="1.3"/>
<circle cx="292.2" cy="327.2" r="1.5" fill="#000"/>
<circle cx="335.3" cy="326.8" r="4.4" fill="#f8f8f8" stroke="#e2e2e2" stroke-width="0.8"/>
<path d="M331.7 329.8 A4.4 4.4 0 0 1 338.7 323.5" fill="none" stroke="#1a1a1a" stroke-width="1.3"/>
<circle cx="314.2" cy="351.6" r="0.9" fill="#111"/>
<circle cx="353.6" cy="351.6" r="0.9" fill="#111"/>
</svg>
<div class="t" style="top:324.53px;font-size:9.3px;font-family:'Liberation Sans',sans-serif;color:#222;left:302px;">Frau</div>
<div class="t" style="top:324.53px;font-size:9.3px;font-family:'Liberation Sans',sans-serif;color:#222;left:345.6px;">Herr</div>
<div class="a" style="left:283px;top:337px;width:23px;height:19px;background:#ffb88f;border:1px solid #a8bcd4"></div>
<div class="a" style="left:322px;top:337px;width:23px;height:19px;background:#ffb88f;border:1px solid #a8bcd4"></div>
<div class="a" style="left:362px;top:337px;width:38px;height:19px;background:#ffb88f;border:1px solid #a8bcd4"></div>
<div class="a" style="left:283px;top:364px;width:170px;height:15px;background:#fff;border-top:2px solid #1a1a1a;border-left:2px solid #1a1a1a;border-right:1px solid #e0e0e0;border-bottom:1px solid #fff"></div>
<div class="a" style="left:438px;top:366px;width:14px;height:12px;background:#c4c4c4;border-top:1px solid #fff;border-left:1px solid #fff;border-right:1px solid #303030;border-bottom:1px solid #303030"></div>
<svg style="left:0;top:0" width="887" height="663"><path d="M442 371.2 L447 371.2 L444.5 374.2 Z" fill="#000"/></svg>
<div class="t" style="top:367.57px;font-size:11px;font-family:'Liberation Mono',monospace;color:#222;letter-spacing:0.25px;left:287px;-webkit-text-stroke:0;">...</div>
<div class="a" style="left:283px;top:380px;width:171px;height:19px;background:#fff;border:1px solid #a8bcd4"></div>
<div class="t" style="top:382.57px;font-size:11px;font-family:'Liberation Mono',monospace;color:#222;letter-spacing:0.25px;left:286.7px;-webkit-text-stroke:0;">Muster</div>
<div class="a" style="left:283px;top:401px;width:43px;height:19px;background:#fff;border:1px solid #a8bcd4"></div>
<div class="t" style="top:403.27px;font-size:11px;font-family:'Liberation Mono',monospace;color:#222;letter-spacing:0.25px;left:286.7px;-webkit-text-stroke:0;">12345</div>
<div class="a" style="left:283px;top:422px;width:171px;height:19px;background:#fff;border:1px solid #a8bcd4"></div>
<div class="t" style="top:424.57px;font-size:11px;font-family:'Liberation Mono',monospace;color:#222;letter-spacing:0.25px;left:286.7px;-webkit-text-stroke:0;">Musterstr. 1</div>
<div class="a" style="left:283px;top:442px;width:43px;height:19px;background:#fff;border:1px solid #a8bcd4"></div>
<div class="t" style="top:444.57px;font-size:11px;font-family:'Liberation Mono',monospace;color:#222;letter-spacing:0.25px;left:286.7px;-webkit-text-stroke:0;">D</div>
<div class="t" style="top:341.70px;font-size:9.8px;font-family:'Liberation Sans',sans-serif;color:#222;letter-spacing:0.62px;right:284.38px;text-align:right;">Öffentliche</div>
<div class="t" style="top:353.80px;font-size:9.8px;font-family:'Liberation Sans',sans-serif;color:#222;letter-spacing:0.62px;right:284.38px;text-align:right;">Titel</div>
<div class="t" style="top:369.30px;font-size:9.8px;font-family:'Liberation Sans',sans-serif;color:#222;letter-spacing:0.62px;right:284.38px;text-align:right;">Akad. Grad</div>
<div class="t" style="top:385.70px;font-size:9.8px;font-family:'Liberation Sans',sans-serif;color:#222;letter-spacing:0.62px;right:284.38px;text-align:right;">Vorname</div>
<div class="t" style="top:406.30px;font-size:9.8px;font-family:'Liberation Sans',sans-serif;color:#222;letter-spacing:0.62px;right:284.38px;text-align:right;">Ort</div>
<div class="t" style="top:447.10px;font-size:9.8px;font-family:'Liberation Sans',sans-serif;color:#222;letter-spacing:0.62px;right:284.38px;text-align:right;">Bundesland</div>
<div class="a" style="left:611px;top:337px;width:171px;height:19px;background:#fff;border:1px solid #a8bcd4"></div>
<div class="a" style="left:611px;top:364px;width:170px;height:14px;background:#fff;border-top:2px solid #1a1a1a;border-left:2px solid #1a1a1a;border-right:1px solid #e0e0e0;border-bottom:1px solid #fff"></div>
<div class="a" style="left:766px;top:366px;width:14px;height:11px;background:#c4c4c4;border-top:1px solid #fff;border-left:1px solid #fff;border-right:1px solid #303030;border-bottom:1px solid #303030"></div>
<svg style="left:0;top:0" width="887" height="663"><path d="M770 370.7 L775 370.7 L772.5 373.7 Z" fill="#000"/></svg>
<div class="t" style="top:367.57px;font-size:11px;font-family:'Liberation Mono',monospace;color:#222;letter-spacing:0.25px;left:614px;-webkit-text-stroke:0;">...</div>
<div class="a" style="left:611px;top:381px;width:171px;height:19px;background:#ffb88f;border:1px solid #a8bcd4"></div>
<div class="a" style="left:611px;top:402px;width:171px;height:18px;background:#fff;border:1px solid #a8bcd4"></div>
<div class="t" style="top:403.57px;font-size:11px;font-family:'Liberation Mono',monospace;color:#222;letter-spacing:0.25px;left:614.8px;-webkit-text-stroke:0;">Musterort</div>
<div class="a" style="left:611px;top:441px;width:170px;height:15px;background:#fff;border-top:2px solid #1a1a1a;border-left:2px solid #1a1a1a;border-right:1px solid #e0e0e0;border-bottom:1px solid #fff"></div>
<div class="a" style="left:766px;top:443px;width:14px;height:12px;background:#c4c4c4;border-top:1px solid #fff;border-left:1px solid #fff;border-right:1px solid #303030;border-bottom:1px solid #303030"></div>
<svg style="left:0;top:0" width="887" height="663"><path d="M770 448.2 L775 448.2 L772.5 451.2 Z" fill="#000"/></svg>
<div class="t" style="top:444.07px;font-size:11px;font-family:'Liberation Mono',monospace;color:#222;letter-spacing:0.25px;left:615px;-webkit-text-stroke:0;">Hessen</div>
<div class="a" style="left:208px;top:465px;width:653px;height:86px;border:1px solid #c8c8c8;box-shadow:inset 1px 1px 0 #fbfbfb"></div>
<div class="a" style="left:218px;top:482px;width:633px;height:1px;background:#d0d0d0"></div>
<div class="t" style="top:468.00px;font-size:9.8px;font-family:'Liberation Sans',sans-serif;color:#222;letter-spacing:0.62px;left:218.3px;">Kommunikation</div>
<div class="t" style="top:468.20px;font-size:9.8px;font-family:'Liberation Sans',sans-serif;color:#222;letter-spacing:0.62px;left:517.8px;">Nr./Daten</div>
<div class="a" style="left:218px;top:489px;width:170px;height:15px;background:#fff;border-top:2px solid #1a1a1a;border-left:2px solid #1a1a1a;border-right:1px solid #e0e0e0;border-bottom:1px solid #fff"></div>
<div class="a" style="left:373px;top:491px;width:14px;height:12px;background:#c4c4c4;border-top:1px solid #fff;border-left:1px solid #fff;border-right:1px solid #303030;border-bottom:1px solid #303030"></div>
<svg style="left:0;top:0" width="887" height="663"><path d="M377 496.2 L382 496.2 L379.5 499.2 Z" fill="#000"/></svg>
<div class="t" style="top:492.57px;font-size:11px;font-family:'Liberation Mono',monospace;color:#222;letter-spacing:0.25px;left:221px;-webkit-text-stroke:0;">...</div>
<div class="a" style="left:517px;top:489px;width:172px;height:19px;background:#fff;border:1px solid #a8bcd4"></div>
<svg style="left:0;top:0" width="887" height="663">
<path d="M817.5 491.5 L822 491.5 L823.5 493 L823.5 500.5 L817.5 500.5 Z" fill="#f0f0f0" stroke="#222" stroke-width="1"/>
<path d="M819 494 L822 494 M819 496 L822 496" stroke="#666" stroke-width="0.8"/>
<path d="M821.5 494.5 L827 494.5 L830.5 498 L830.5 502.5 L821.5 502.5 Z" fill="#e8e8e8" stroke="#222" stroke-width="1"/>
<path d="M823 497.5 L828 497.5 M823 499.5 L829 499.5" stroke="#666" stroke-width="0.8"/>
</svg>
<div class="a" style="left:219px;top:522px;width:81px;height:15px;background:#0099cc"></div>
<div class="t" style="top:524.36px;font-size:9.5px;font-family:'Liberation Sans',sans-serif;color:#fff;font-weight:bold;letter-spacing:0.3px;left:232.6px;">hinzufügen</div>
<div class="t" style="top:565.20px;font-size:9.8px;font-family:'Liberation Sans',sans-serif;color:#222;letter-spacing:0.62px;left:222.8px;">Erreichbar</div>
<div class="a" style="left:222px;top:581px;width:638px;height:43px;background:#fff;border:1px solid #a8bcd4"></div>
<svg style="left:0;top:0" width="887" height="663">
<defs><pattern id="dith2" width="2" height="2" patternUnits="userSpaceOnUse"><rect width="2" height="2" fill="#e4e4e4"/><rect width="1" height="1" fill="#d4d4d4"/><rect x="1" y="1" width="1" height="1" fill="#d4d4d4"/></pattern></defs>
<rect x="846" y="582" width="13" height="41" fill="url(#dith2)"/>
<rect x="846" y="582" width="13" height="13" fill="#bcbcbc"/>
<path d="M849 590.5 L855.5 590.5 L852.25 587 Z" fill="#7a7a7a"/>
<path d="M849.5 592 L855 592" stroke="#fff" stroke-width="1"/>
<rect x="846" y="610" width="13" height="13" fill="#bcbcbc"/>
<path d="M849 614.5 L855.5 614.5 L852.25 618 Z" fill="#7a7a7a"/>
<path d="M852.5 618.5 L856 615" stroke="#fff" stroke-width="1"/>
</svg>
</body></html>
